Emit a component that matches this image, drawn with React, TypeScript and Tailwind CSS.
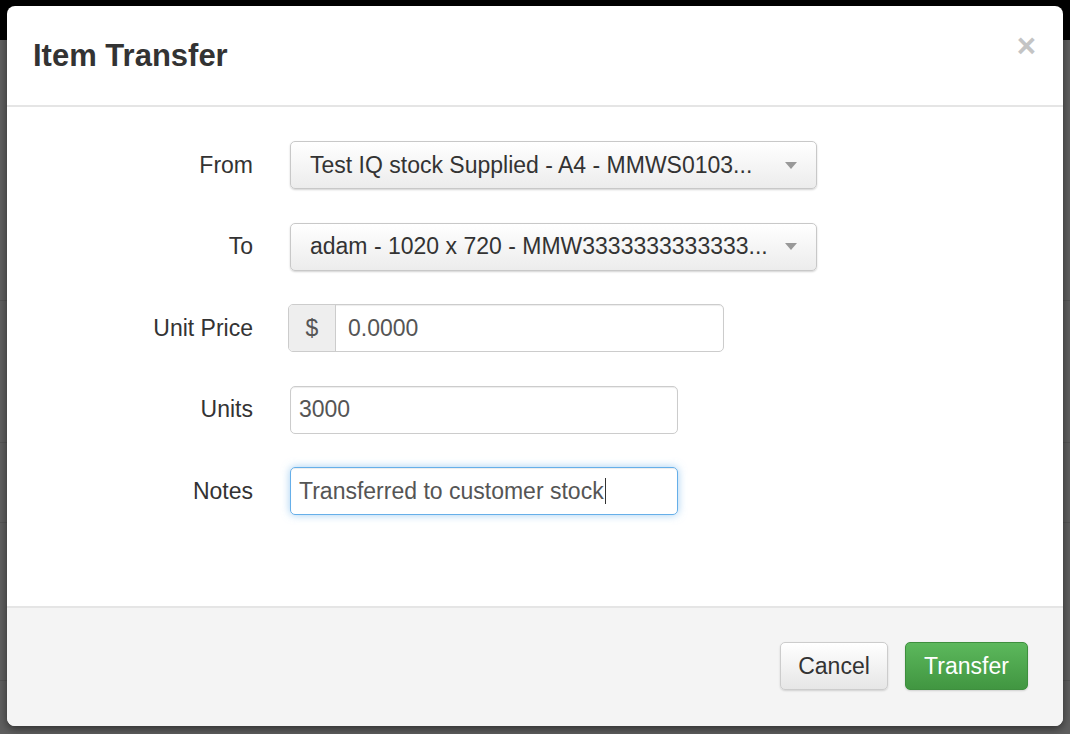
import React from 'react';

const font = { fontFamily: '"Liberation Sans", Arial, sans-serif' };

function Caret() {
  return (
    <svg width="12" height="7" viewBox="0 0 12 7" className="shrink-0">
      <path d="M0 0 L12 0 L6 7 Z" fill="#999" />
    </svg>
  );
}

function SelectBox({ value }: { value: string }) {
  return (
    <div className="w-[527px] h-[48px] flex items-center justify-between pl-[19px] pr-[19px] rounded-[5px] border border-[#c8c8c8] bg-gradient-to-b from-white to-[#ececec] shadow-[0_1px_2px_rgba(0,0,0,0.18)] text-[#333]">
      <span className="whitespace-nowrap">{value}</span>
      <Caret />
    </div>
  );
}

function Row({ label, children }: { label: string; children: React.ReactNode }) {
  return (
    <div className="flex items-center h-[48px]">
      <div className="w-[246px] text-right text-[#333] shrink-0">{label}</div>
      <div className="ml-[37px]">{children}</div>
    </div>
  );
}

export default function App() {
  return (
    <div className="relative w-[1070px] h-[734px] bg-[#5f5f5f] overflow-hidden" style={font}>
      <div className="absolute inset-x-0 top-0 h-[40px] bg-black" />
      <div className="absolute left-0 right-0 top-[300px] h-px bg-[#555]" />
      <div className="absolute left-0 right-0 top-[442px] h-px bg-[#555]" />
      <div className="absolute left-0 right-0 top-[522px] h-px bg-[#555]" />
      <div className="absolute left-0 right-0 top-[680px] h-px bg-[#555]" />

      <div className="relative pt-[6px] pl-[7px]">
        <div className="w-[1056px] h-[720px] bg-white rounded-[8px] overflow-hidden flex flex-col shadow-[0_3px_9px_rgba(0,0,0,0.5)] text-[23px]">
          {/* header */}
          <div className="h-[101px] shrink-0 border-b-2 border-[#e5e5e5] flex items-start justify-between pl-[26px] pr-[27px] pt-[34px]">
            <h3 className="text-[31px] font-bold text-[#333] leading-none">Item Transfer</h3>
            <span className="text-[#c4c4c4] font-bold text-[33px] leading-none -mt-[11px]">×</span>
          </div>

          {/* body */}
          <div className="flex-1 pt-[34px] flex flex-col gap-[33.5px]">
            <Row label="From">
              <SelectBox value="Test IQ stock Supplied - A4 - MMWS0103..." />
            </Row>
            <Row label="To">
              <SelectBox value="adam - 1020 x 720 - MMW3333333333333..." />
            </Row>
            <Row label="Unit Price">
              <div className="-ml-[2px] w-[436px] h-[48px] flex rounded-[5px] border border-[#ccc] overflow-hidden shadow-[inset_0_1px_1px_rgba(0,0,0,0.075)]">
                <div className="w-[47px] bg-[#eee] border-r border-[#ccc] flex items-center justify-center text-[#555]">$</div>
                <div className="flex-1 flex items-center pl-[12px] text-[#555]">0.0000</div>
              </div>
            </Row>
            <Row label="Units">
              <div className="w-[388px] h-[48px] flex items-center pl-[8px] rounded-[5px] border border-[#ccc] text-[#555] shadow-[inset_0_1px_1px_rgba(0,0,0,0.075)]">
                3000
              </div>
            </Row>
            <Row label="Notes">
              <div className="w-[388px] h-[48px] flex items-center pl-[8px] rounded-[5px] border border-[#66afe9] text-[#555] shadow-[inset_0_1px_1px_rgba(0,0,0,0.075),0_0_8px_rgba(102,175,233,0.6)]">
                <span>Transferred to customer stock</span>
                <span className="inline-block w-px h-[26px] bg-[#333] ml-[1px]" />
              </div>
            </Row>
          </div>

          {/* footer */}
          <div className="h-[120px] shrink-0 border-t-2 border-[#e5e5e5] bg-[#f4f4f4] flex items-start justify-end gap-[17px] pt-[34px] pr-[35px]">
            <button className="w-[108px] h-[48px] rounded-[5px] border border-[#ccc] bg-gradient-to-b from-white to-[#e6e6e6] text-[#333] shadow-[0_1px_2px_rgba(0,0,0,0.15)]">
              Cancel
            </button>
            <button className="w-[123px] h-[48px] rounded-[5px] border border-[#3e8f3e] bg-gradient-to-b from-[#5cb85c] to-[#419641] text-white shadow-[0_1px_2px_rgba(0,0,0,0.15)]">
              Transfer
            </button>
          </div>
        </div>
      </div>
    </div>
  );
}
